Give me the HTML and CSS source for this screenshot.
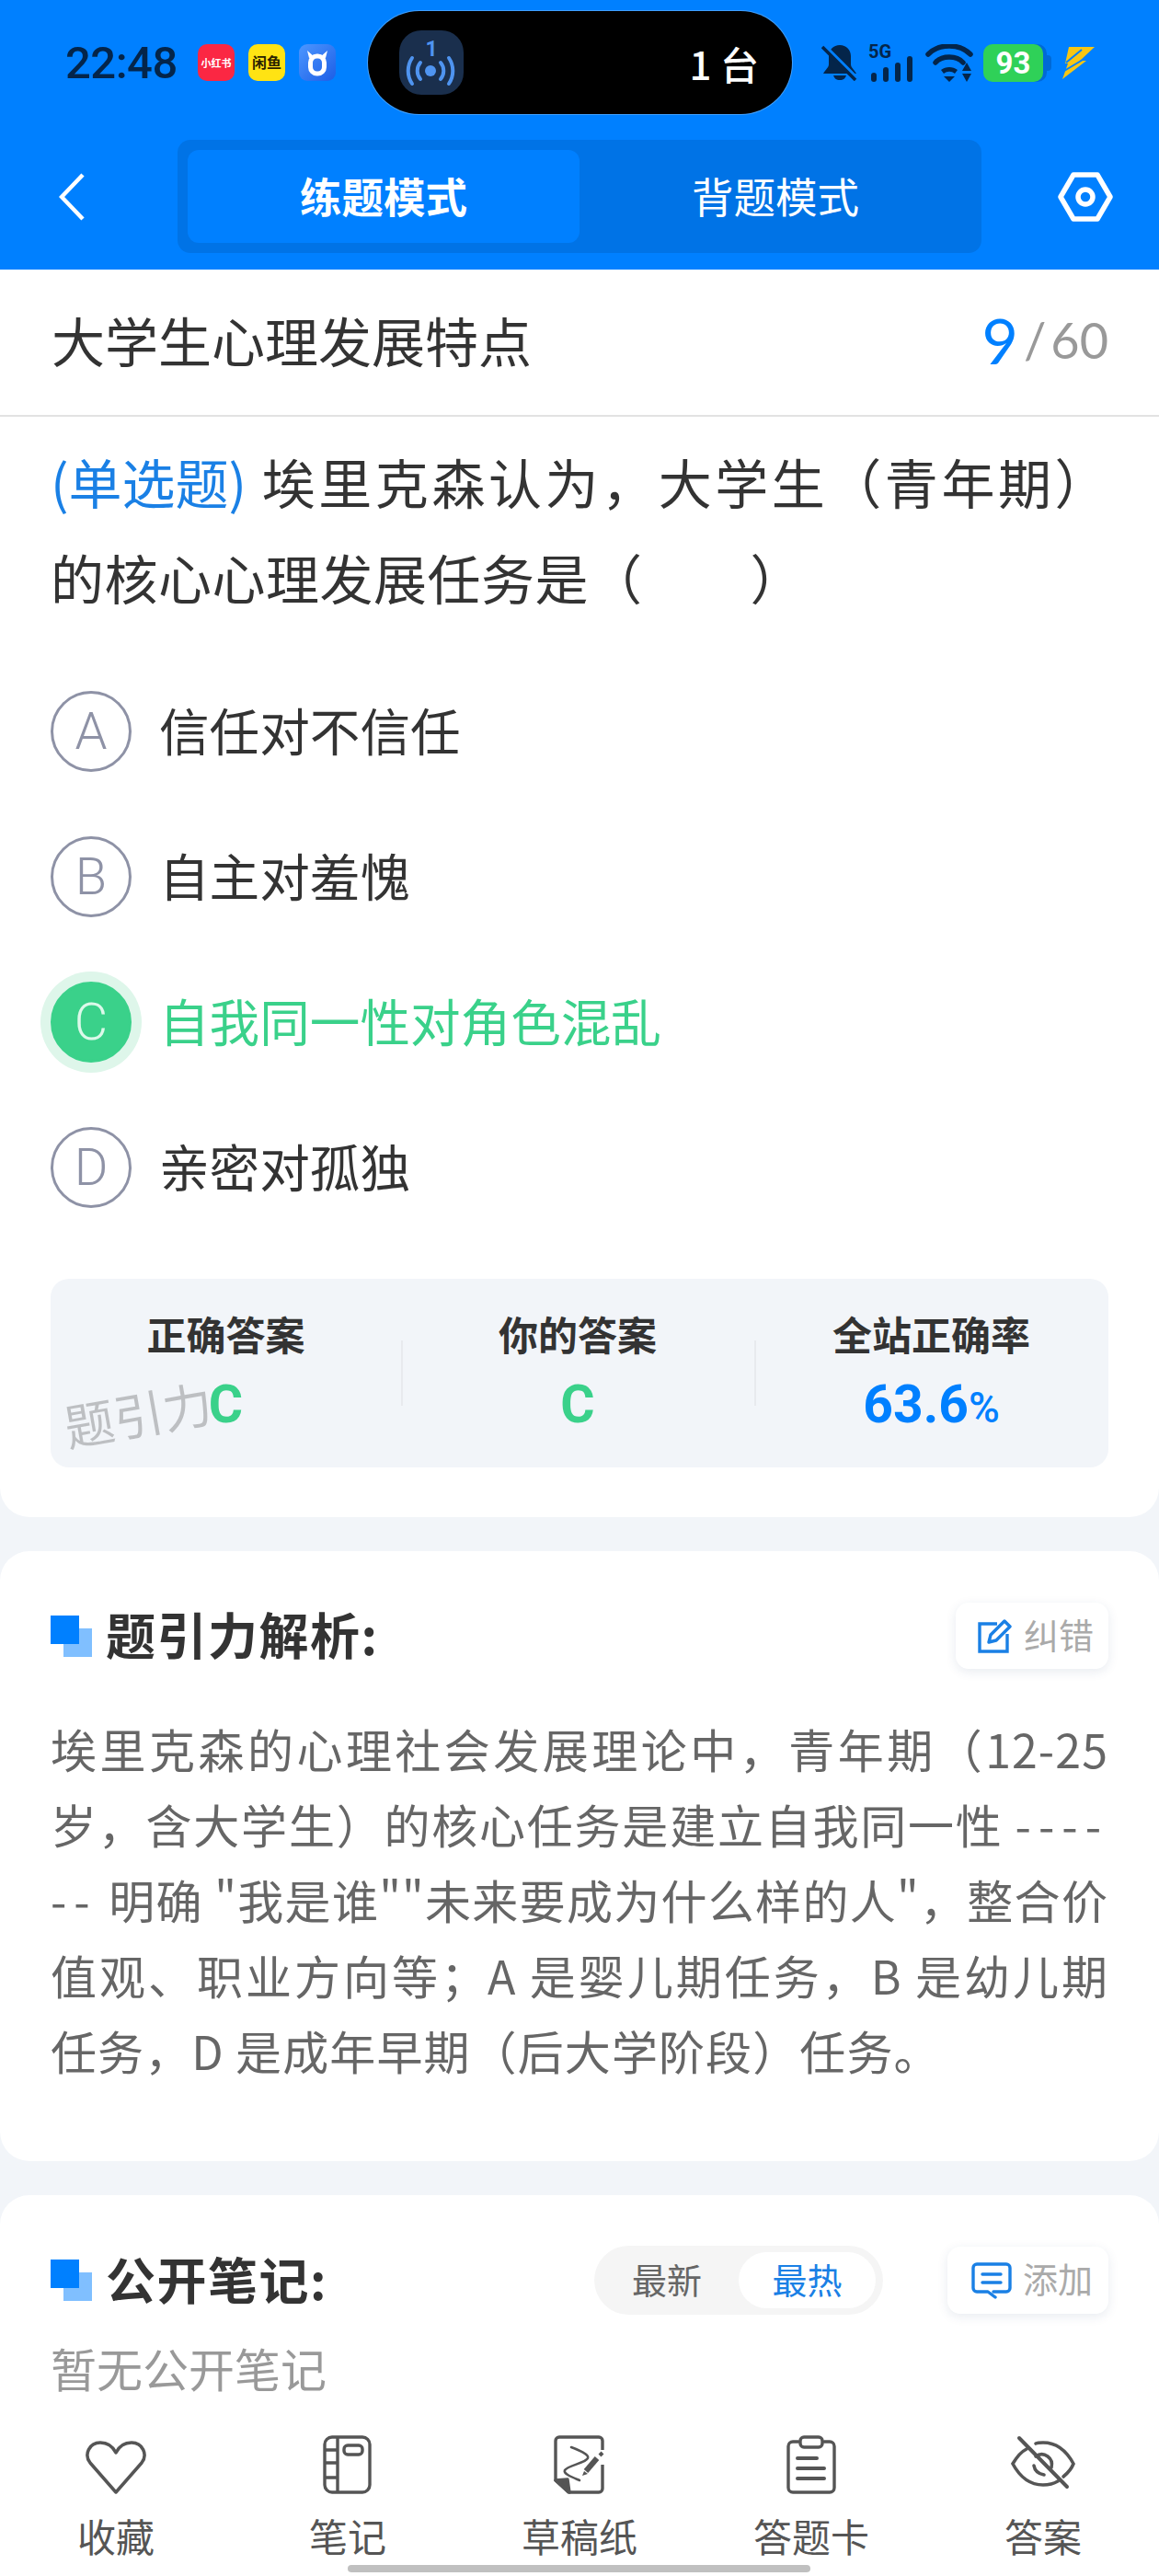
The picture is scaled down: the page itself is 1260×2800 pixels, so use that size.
FILE: index.html
```html
<!DOCTYPE html>
<html lang="zh-CN">
<head>
  <meta charset="UTF-8" />
  <title>题引力</title>
  <meta name="viewport" content="width=device-width, initial-scale=1.0" />
  <link rel="stylesheet" href="styles.css">
</head>
<body>
  <div class="phone">
    <header class="top">
      <div class="status">
        <span class="time">22:48</span>
        <div class="apps">
          <svg class="app" viewBox="0 0 40 40"><rect width="40" height="40" rx="10" fill="#fb2743"/><text x="20" y="25" text-anchor="middle" class="app-red">小红书</text></svg>
          <svg class="app" viewBox="0 0 40 40"><rect width="40" height="40" rx="10" fill="#ffe313"/><text x="20" y="26" text-anchor="middle" class="app-yellow">闲鱼</text></svg>
          <svg class="app" viewBox="0 0 40 40">
            <defs><linearGradient id="cowBg" x1="0" y1="0" x2="1" y2="1"><stop offset="0" stop-color="#4d97ff"/><stop offset="1" stop-color="#1c5ee6"/></linearGradient></defs>
            <rect width="40" height="40" rx="9" fill="url(#cowBg)"/>
            <rect x="12.5" y="13" width="15" height="19" rx="7" fill="none" stroke="#fff" stroke-width="5"/>
            <path d="M9 7l2 8 6-1zM31 7l-2 8-6-1z" fill="#fff"/>
          </svg>
        </div>
        <div class="island">
          <svg class="island-icon" viewBox="0 0 70 70">
            <rect width="70" height="70" rx="24" fill="#1a2f4d"/>
            <text x="35" y="28" text-anchor="middle" class="island-num">1</text>
            <circle cx="34" cy="44" r="6" fill="#4f94f0"/>
            <g fill="none" stroke="#4f94f0" stroke-width="4" stroke-linecap="round">
              <path d="M23 35a14 14 0 0 0 0 18M45 35a14 14 0 0 1 0 18M14 30a25 25 0 0 0 0 28M54 30a25 25 0 0 1 0 28"/>
            </g>
          </svg>
          <span class="island-text">1 台</span>
        </div>
        <div class="sys">
          <svg class="sys-bell" viewBox="0 0 40 40" fill="#04254a">
            <path d="M20 1c-7 0-12 5-12 12v9c0 3-3 5-6 10h36c-3-5-6-7-6-10v-9c0-7-5-12-12-12z"/>
            <path d="M13 34h14c-1 3-3 5-7 5s-6-2-7-5z"/>
            <path d="M4 2l36 36" stroke="#0080ff" stroke-width="3.5"/>
            <path d="M1 3l36 36" stroke="#04254a" stroke-width="3.5"/>
          </svg>
          <div class="signal">
            <span class="signal-label">5G</span>
            <div class="bars">
              <i class="bar b1"></i><i class="bar b2"></i><i class="bar b3"></i><i class="bar b4"></i>
            </div>
          </div>
          <svg class="sys-wifi" viewBox="0 0 52 41">
            <g fill="none" stroke="#04254a" stroke-width="5.5" stroke-linecap="round">
              <path d="M3 11C15 -1 37 -1 49 11"/>
              <path d="M11 20C18 12 34 12 41 20"/>
            </g>
            <path d="M17 28c5-4 13-4 18 0l-3 4c-4-3-8-3-12 0z" fill="#04254a"/>
            <path d="M20 35h12l-6 6zM40 32h10l-5 9zM40 29h10l-5-9z" fill="#04254a"/>
          </svg>
          <div class="battery"><span class="battery-level">93</span></div>
          <svg class="sys-bolt" viewBox="0 0 35 35">
            <path d="M7 0h28L19 15h7L0 35l6-17h-3z" fill="#f7c613"/>
            <path d="M4 17L21 3M2 26l20-12" stroke="#0080ff" stroke-width="2"/>
          </svg>
        </div>
      </div>
      <nav class="nav">
        <svg class="back" viewBox="0 0 28 52"><path d="M26 2L3 26l23 24" fill="none" stroke="#fff" stroke-width="4.5"/></svg>
        <div class="mode">
          <div class="mode-item on">练题模式</div>
          <div class="mode-item">背题模式</div>
        </div>
        <svg class="setting" viewBox="0 0 60 54">
          <path d="M17 3h26l14 24-14 24H17L3 27z" fill="none" stroke="#fff" stroke-width="5.5" stroke-linejoin="round"/>
          <circle cx="30" cy="27" r="8" fill="none" stroke="#fff" stroke-width="5.5"/>
        </svg>
      </nav>
    </header>

    <main class="content">
      <section class="card">
        <div class="chapter">
          <span class="chapter-name">大学生心理发展特点</span>
          <span class="count"><b>9</b><i>/</i><em>60</em></span>
        </div>
        <div class="question">
          <p class="q-text"><span class="q-type">(单选题)</span> 埃里克森认为，大学生（青年期）的核心心理发展任务是（　　）</p>
          <div class="opt"><span class="opt-key">A</span><span class="opt-text">信任对不信任</span></div>
          <div class="opt"><span class="opt-key">B</span><span class="opt-text">自主对羞愧</span></div>
          <div class="opt right"><span class="opt-key">C</span><span class="opt-text">自我同一性对角色混乱</span></div>
          <div class="opt"><span class="opt-key">D</span><span class="opt-text">亲密对孤独</span></div>
          <div class="stats">
            <div class="stat"><div class="stat-label">正确答案</div><div class="stat-value green">C</div></div>
            <div class="stat"><div class="stat-label">你的答案</div><div class="stat-value green">C</div></div>
            <div class="stat"><div class="stat-label">全站正确率</div><div class="stat-value blue">63.6<small>%</small></div></div>
            <span class="mark">题引力</span>
          </div>
        </div>
      </section>

      <section class="card panel">
        <div class="panel-head">
          <h3 class="panel-title"><span class="squares"></span>题引力解析:</h3>
          <div class="tool">
            <svg class="tool-icon" viewBox="0 0 38 38" fill="none" stroke="#1a80e5" stroke-width="3.4">
              <path d="M21 6H2v30h30V17"/>
              <path d="M12 26l2-8L29 3l6 6-15 15z" stroke-linejoin="round"/>
            </svg>
            <span class="tool-text">纠错</span>
          </div>
        </div>
        <p class="analysis">埃里克森的心理社会发展理论中，青年期（12-25岁，含大学生）的核心任务是建立自我同一性 <span class="dash">------</span> 明确 "我是谁""未来要成为什么样的人"，整合价值观、职业方向等；A 是婴儿期任务，B 是幼儿期任务，D 是成年早期（后大学阶段）任务。</p>
      </section>

      <section class="card panel notes">
        <div class="panel-head">
          <h3 class="panel-title"><span class="squares"></span>公开笔记:</h3>
          <div class="head-right">
            <div class="sort">
              <span class="sort-item">最新</span>
              <span class="sort-item on">最热</span>
            </div>
            <div class="tool tool-add">
              <svg class="tool-icon add" viewBox="0 0 44 40" fill="none" stroke="#1a80e5" stroke-width="3.4" stroke-linecap="round" stroke-linejoin="round">
                <path d="M24 32h14a4 4 0 0 0 4-4V6a4 4 0 0 0-4-4H6a4 4 0 0 0-4 4v22a4 4 0 0 0 4 4h12l8 6"/>
                <path d="M12 13h20M12 22h20"/>
              </svg>
              <span class="tool-text">添加</span>
            </div>
          </div>
        </div>
        <p class="empty">暂无公开笔记</p>
      </section>
    </main>

    <footer class="tabs">
      <div class="tab">
        <svg class="tab-icon" viewBox="0 0 68 64" fill="none" stroke="#555" stroke-width="3.5" stroke-linejoin="round">
          <path d="M34 62L6 30C-1 21 5 8 17 8c8 0 14 5 17 11 3-6 9-11 17-11 12 0 18 13 11 22z"/>
        </svg>
        <span>收藏</span>
      </div>
      <div class="tab">
        <svg class="tab-icon" viewBox="0 0 68 64" fill="none" stroke="#555" stroke-width="3.4">
          <rect x="9" y="2" width="49" height="60" rx="8"/>
          <path d="M23 2v60M9 16h14M9 30h14M9 46h14"/>
          <rect x="30" y="11" width="20" height="10" rx="4"/>
        </svg>
        <span>笔记</span>
      </div>
      <div class="tab">
        <svg class="tab-icon" viewBox="0 0 56 64" fill="none" stroke="#555" stroke-width="3.4" stroke-linejoin="round">
          <path d="M53 16V6a4 4 0 0 0-4-4H6a4 4 0 0 0-4 4v43l14 13h33a4 4 0 0 0 4-4V32"/>
          <path d="M19 13c8 3 20 8 18 12-2 5-22 8-25 13-2 4 9 8 16 11" stroke-width="2.6" stroke-linecap="round"/>
          <path d="M2 49l13-1 2 14z" fill="#555"/>
          <path d="M35 39l12-14" stroke-width="6"/>
          <path d="M31 44l2-5 4 3z" fill="#555" stroke="none"/>
          <path d="M50 22l3-3" stroke-width="4"/>
        </svg>
        <span>草稿纸</span>
      </div>
      <div class="tab">
        <svg class="tab-icon" viewBox="0 0 56 64" fill="none" stroke="#555" stroke-width="3.4" stroke-linecap="round">
          <path d="M14 7H8a5 5 0 0 0-5 5v45a5 5 0 0 0 5 5h40a5 5 0 0 0 5-5V12a5 5 0 0 0-5-5h-6"/>
          <rect x="16" y="2" width="24" height="11" rx="4"/>
          <path d="M13 25h21M13 36h29M13 47h29" stroke-width="4"/>
        </svg>
        <span>答题卡</span>
      </div>
      <div class="tab">
        <svg class="tab-icon" viewBox="0 0 70 64" fill="none" stroke="#555" stroke-width="3.6" stroke-linecap="round">
          <path d="M17 15C9 19 5 26 2 31c7 13 18 23 33 23 6 0 11-1 16-4"/>
          <path d="M27 9c2-1 5-1 8-1 15 0 26 10 33 23-2 5-6 10-11 14"/>
          <path d="M25 33c1 6 5 9 11 10M27 23c4-3 9-3 13 0 4 3 5 8 4 12"/>
          <path d="M9 3l52 53" stroke-width="4"/>
        </svg>
        <span>答案</span>
      </div>
    </footer>
    <div class="home-bar"></div>
  </div>
</body>
</html>
```

FILE: styles.css
```css
:root {
  --blue: #0080ff;
  --blue-dark: #0073e6;
  --link: #1a80e5;
  --green: #3ad18a;
  --page: #f2f5f9;
  --ink: #333;
  --cjk: "Noto Sans CJK SC", "Noto Sans", sans-serif;
}

* {
  box-sizing: border-box;
}

body {
  margin: 0;
  background: var(--page);
  font-family: var(--cjk);
  color: var(--ink);
}

.phone {
  position: relative;
  display: flex;
  flex-direction: column;
  width: 1260px;
  height: 2800px;
  overflow: hidden;
}

/* top blue area */
.top {
  flex: none;
  height: 293px;
  padding-top: 12px;
  background: var(--blue);
}

.status {
  display: flex;
  align-items: center;
  height: 112px;
  padding-left: 71px;
}

.time {
  width: 122px;
  margin-right: 22px;
  font-family: Roboto, sans-serif;
  font-size: 49px;
  font-weight: 500;
  letter-spacing: -0.5px;
  color: #04254a;
}

.apps {
  display: flex;
  gap: 15px;
}

.app {
  display: block;
  width: 40px;
  height: 40px;
}

.app-red {
  font-size: 11px;
  font-weight: 700;
  fill: #fff;
}

.app-yellow {
  font-size: 16px;
  font-weight: 700;
  fill: #2a2200;
}

.island {
  display: flex;
  align-items: center;
  justify-content: space-between;
  width: 461px;
  height: 112px;
  margin-left: 35px;
  padding: 0 36px 0 34px;
  background: #000;
  border-radius: 56px;
  box-shadow: 0 0 0 1px rgba(255, 255, 255, 0.25);
}

.island-icon {
  width: 70px;
  height: 70px;
}

.island-num {
  font-family: Roboto, sans-serif;
  font-size: 23px;
  font-weight: 700;
  fill: #4f94f0;
}

.island-text {
  font-size: 42px;
  font-weight: 500;
  color: #fff;
}

.sys {
  display: flex;
  align-items: center;
  margin-left: 32px;
}

.sys-bell {
  width: 40px;
  height: 40px;
}

.signal {
  position: relative;
  width: 49px;
  height: 41px;
  margin-left: 11px;
}

.signal-label {
  position: absolute;
  left: 0;
  top: 1px;
  font-family: Roboto, sans-serif;
  font-size: 20px;
  line-height: 14px;
  font-weight: 700;
  color: #04254a;
}

.bars {
  position: absolute;
  left: 3px;
  bottom: 0;
  display: flex;
  align-items: flex-end;
  gap: 7px;
}

.bar {
  display: block;
  width: 6px;
  background: #04254a;
  border-radius: 3px;
}

.b1 { height: 10px; }
.b2 { height: 16px; }
.b3 { height: 21px; }
.b4 { height: 28px; }

.sys-wifi {
  width: 52px;
  height: 41px;
  margin-left: 13px;
}

.battery {
  position: relative;
  width: 65px;
  height: 41px;
  margin-left: 11px;
  background: #2fd158;
  border-radius: 10px;
  text-align: center;
  box-shadow: 4px 0 0 #0069d6;
}

.battery::after {
  content: "";
  position: absolute;
  right: -9px;
  top: 12px;
  width: 5px;
  height: 17px;
  background: #0069d6;
  border-radius: 0 4px 4px 0;
}

.battery-level {
  font-family: Roboto, sans-serif;
  font-size: 33px;
  line-height: 41px;
  font-weight: 700;
  color: #fff;
}

.sys-bolt {
  width: 35px;
  height: 35px;
  margin-left: 21px;
}

.nav {
  display: flex;
  align-items: center;
  margin-top: 28px;
  padding-left: 64px;
}

.back {
  width: 28px;
  height: 52px;
}

.mode {
  display: grid;
  grid-template-columns: 426px 426px;
  width: 874px;
  height: 123px;
  margin-left: 101px;
  padding: 11px;
  background: var(--blue-dark);
  border-radius: 14px;
}

.mode-item {
  font-size: 45.5px;
  line-height: 98px;
  text-align: center;
  color: #fff;
}

.mode-item.on {
  font-weight: 700;
  background: var(--blue);
  border-radius: 12px;
}

.setting {
  width: 60px;
  height: 54px;
  margin-left: 83px;
}

/* scrolling part */
.content {
  flex: 1;
  min-height: 0;
  overflow: hidden;
}

.card {
  margin-bottom: 37px;
  background: #fff;
  border-radius: 0 0 32px 32px;
}

.chapter {
  display: flex;
  align-items: center;
  justify-content: space-between;
  height: 160px;
  padding: 0 55px 6px 56px;
  border-bottom: 2px solid #e2e2e2;
}

.chapter-name {
  font-size: 58px;
  color: var(--ink);
}

.count {
  display: flex;
  align-items: center;
  margin-top: 2px;
  font-family: Lato, sans-serif;
  line-height: 1;
  color: #999;
}

.count b {
  font-size: 68px;
  font-weight: 400;
  color: var(--blue);
}

.count i {
  margin: 0 5px 0 6px;
  font-size: 54px;
  font-style: normal;
}

.count em {
  font-size: 54px;
  font-style: normal;
}

.question {
  padding: 18px 55px 54px;
}

.q-text {
  margin: 0 0 37px;
  font-size: 58px;
  line-height: 104px;
  letter-spacing: 0.5px;
  text-align: justify;
}

.q-type {
  display: inline-block;
  letter-spacing: 0;
  color: var(--link);
}

.opt {
  display: flex;
  align-items: center;
  height: 158px;
  font-size: 54.6px;
}

.opt-key {
  flex: none;
  width: 88px;
  height: 88px;
  margin-right: 30px;
  border: 3px solid #8e92a6;
  border-radius: 50%;
  font-family: Roboto, sans-serif;
  font-size: 56px;
  font-weight: 300;
  line-height: 82px;
  text-align: center;
  color: #8e92a6;
}

.opt-text {
  margin-top: -6px;
}

.opt.right {
  color: var(--green);
}

.opt.right .opt-key {
  background: var(--green);
  border-color: var(--green);
  color: #dcf9ea;
  box-shadow: 0 0 0 11px #def6ea;
}

.stats {
  position: relative;
  display: grid;
  grid-template-columns: 381px 384px 385px;
  height: 205px;
  margin-top: 42px;
  background: var(--page);
  border-radius: 20px;
}

.stat {
  position: relative;
  padding-top: 31px;
  text-align: center;
}

.stat + .stat::before {
  content: "";
  position: absolute;
  left: 0;
  top: 67px;
  width: 2px;
  height: 71px;
  background: #e8eaee;
}

.stat-label {
  font-size: 43px;
  line-height: 56px;
  font-weight: 700;
}

.stat-value {
  margin-top: 15px;
  font-family: Roboto, sans-serif;
  font-size: 57px;
  line-height: 70px;
  font-weight: 700;
}

.stat-value small {
  font-size: 46px;
  font-weight: 500;
}

.green {
  color: var(--green);
}

.blue {
  color: var(--blue);
}

.mark {
  position: absolute;
  left: 14px;
  top: 116px;
  font-size: 54px;
  line-height: 60px;
  color: rgba(0, 0, 0, 0.22);
  transform: rotate(-10deg);
}

.panel {
  padding: 56px 55px 80px;
  border-radius: 32px;
}

.panel-head {
  display: flex;
  align-items: center;
  justify-content: space-between;
  height: 72px;
}

.panel-title {
  display: flex;
  align-items: center;
  margin: 0;
  padding-bottom: 4px;
  font-size: 54px;
  line-height: 72px;
  font-weight: 700;
  letter-spacing: 1.5px;
}

.squares {
  position: relative;
  width: 45px;
  height: 45px;
  margin: 4px 15px 0 0;
}

.squares::before,
.squares::after {
  content: "";
  position: absolute;
  width: 31px;
  height: 31px;
}

.squares::before {
  left: 14px;
  top: 14px;
  background: #80bfff;
}

.squares::after {
  left: 0;
  top: 0;
  background: var(--blue);
}

.tool {
  display: flex;
  align-items: center;
  gap: 12px;
  height: 72px;
  padding: 0 16px 0 24px;
  background: #fff;
  border-radius: 14px;
  box-shadow: 0 3px 12px rgba(30, 60, 110, 0.1);
  font-size: 38px;
  color: #aaa;
}

.tool-text {
  margin-top: -6px;
}

.tool-icon {
  width: 38px;
  height: 38px;
}

.tool-icon.add {
  width: 44px;
  height: 40px;
}

.analysis {
  margin: 45px 0 0;
  font-size: 50px;
  line-height: 82px;
  letter-spacing: 1.1px;
  text-align: justify;
  word-break: break-all;
  color: #666;
}

/* the dash run is spaced wider than the body text */
.dash {
  letter-spacing: 8px;
}

.notes {
  min-height: 240px;
  margin-bottom: 0;
  padding: 55px 55px 0;
  border-radius: 32px 32px 0 0;
}

.notes .panel-head {
  height: 75px;
}

.head-right {
  display: flex;
  align-items: center;
  gap: 70px;
}

.sort {
  display: flex;
  align-items: center;
  justify-content: space-between;
  width: 314px;
  height: 75px;
  padding: 0 8px 4px 41px;
  background: #f5f5f5;
  border-radius: 38px;
  font-size: 38px;
  color: #666;
}

.sort-item.on {
  width: 149px;
  height: 61px;
  margin-top: 4px;
  padding-bottom: 4px;
  background: #fff;
  border-radius: 31px;
  line-height: 57px;
  text-align: center;
  color: var(--link);
}

.tool-add {
  height: 73px;
  padding: 0 17px 0 26px;
}

.empty {
  margin: 22px 0 0;
  font-size: 50px;
  line-height: 70px;
  color: #999;
}

/* bottom tabs */
.tabs {
  flex: none;
  display: grid;
  grid-template-columns: repeat(5, 252px);
  height: 180px;
  padding-top: 27px;
  background: #fff;
}

.tab {
  display: flex;
  flex-direction: column;
  align-items: center;
  font-size: 42px;
  line-height: 50px;
  color: #555;
}

.tab-icon {
  display: block;
  height: 64px;
  margin-bottom: 20px;
}

.home-bar {
  position: absolute;
  left: 378px;
  bottom: 4px;
  width: 503px;
  height: 8px;
  background: #c0c0c0;
  border-radius: 4px;
}
```
